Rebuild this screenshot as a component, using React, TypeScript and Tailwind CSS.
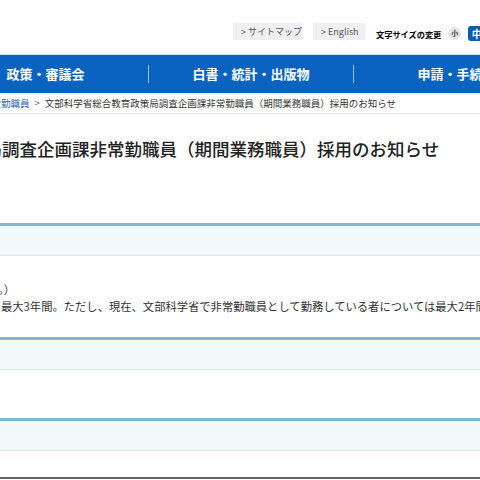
import React from "react";

const jp = "font-['Meiryo','Noto_Sans_CJK_JP',sans-serif]";

// section heading band with teal rule on top
const Band = () => (
  <div className="border-t-[3px] border-[#7fbccb] border-b border-b-[#dde5ea] bg-[#f2f9fb] h-[33px]" />
);

const App = () => {
  return (
    <div className={`w-[480px] h-[480px] overflow-hidden bg-white text-[#333] ${jp}`}>
      {/* utility links */}
      <div className="h-[54px] flex items-start pt-[23px] pl-[233px] whitespace-nowrap">
        <a className="shrink-0 w-[69px] h-[17px] bg-[#eef0f1] text-[9px] text-[#556] flex items-center pl-[8px]">&gt; サイトマップ</a>
        <a className="shrink-0 ml-[11px] w-[52px] h-[17px] bg-[#eef0f1] text-[9px] text-[#556] flex items-center pl-[8px]">&gt; English</a>
        <span className="shrink-0 ml-[11px] mt-[5px] text-[8.2px] font-bold text-black">文字サイズの変更</span>
        <span className="ml-[7px] mt-[4px] w-[13px] h-[13px] shrink-0 rounded-full bg-[#e3e7e8] text-[7px] font-bold flex items-center justify-center">小</span>
        <span className="ml-[7px] mt-[3px] w-[17px] h-[15px] shrink-0 rounded-[3px] bg-[#0b5cb5] text-white text-[10px] font-bold flex items-center justify-center">中</span>
      </div>

      {/* global nav */}
      <nav className="border-t border-[#cfe3f5] bg-[#0a63c1] h-[39px] overflow-hidden">
        <div className="ml-[-57px] flex items-center h-full whitespace-nowrap text-white text-[13px] font-bold">
          <div className="w-[205px] shrink-0 text-center">政策・審議会</div>
          <span className="w-px h-[18px] bg-[#9cc3ea] shrink-0" />
          <div className="w-[204px] shrink-0 text-center">白書・統計・出版物</div>
          <span className="w-px h-[18px] bg-[#9cc3ea] shrink-0" />
          <div className="w-[205px] shrink-0 text-center">申請・手続き</div>
        </div>
      </nav>

      {/* breadcrumb */}
      <div className="h-[21px] border-t border-[#d7e8f6] border-b border-b-[#e6e6e6] overflow-hidden">
        <div className="ml-[-18px] flex items-center h-full whitespace-nowrap text-[9.5px] text-[#333]">
          <a className="shrink-0 text-[#1a5fb4]">非常勤職員</a>
          <span className="shrink-0 mx-[5px] text-[#666]">&gt;</span>
          <span className="shrink-0">文部科学省総合教育政策局調査企画課非常勤職員（期間業務職員）採用のお知らせ</span>
        </div>
      </div>

      {/* page title */}
      <h1 className="mt-[23px] ml-[-208px] whitespace-nowrap text-[17.5px] leading-[24px] text-[#222] font-medium">
        文部科学省総合教育政策局調査企画課非常勤職員（期間業務職員）採用のお知らせ
      </h1>

      <div className="mt-[62px]">
        <Band />
        <div className="h-[81px] pt-[25px] overflow-hidden whitespace-nowrap text-[11.3px] leading-[17px]">
          <p className="ml-[-2px]">。）</p>
          <p className="ml-[1px]">最大3年間。ただし、現在、文部科学省で非常勤職員として勤務している者については最大2年間とする。</p>
        </div>
        <Band />
        <div className="h-[48px]" />
        <Band />
        <div className="h-[26px]" />
        <div className="border-t-2 border-[#666]" />
      </div>
    </div>
  );
};

export default App;
